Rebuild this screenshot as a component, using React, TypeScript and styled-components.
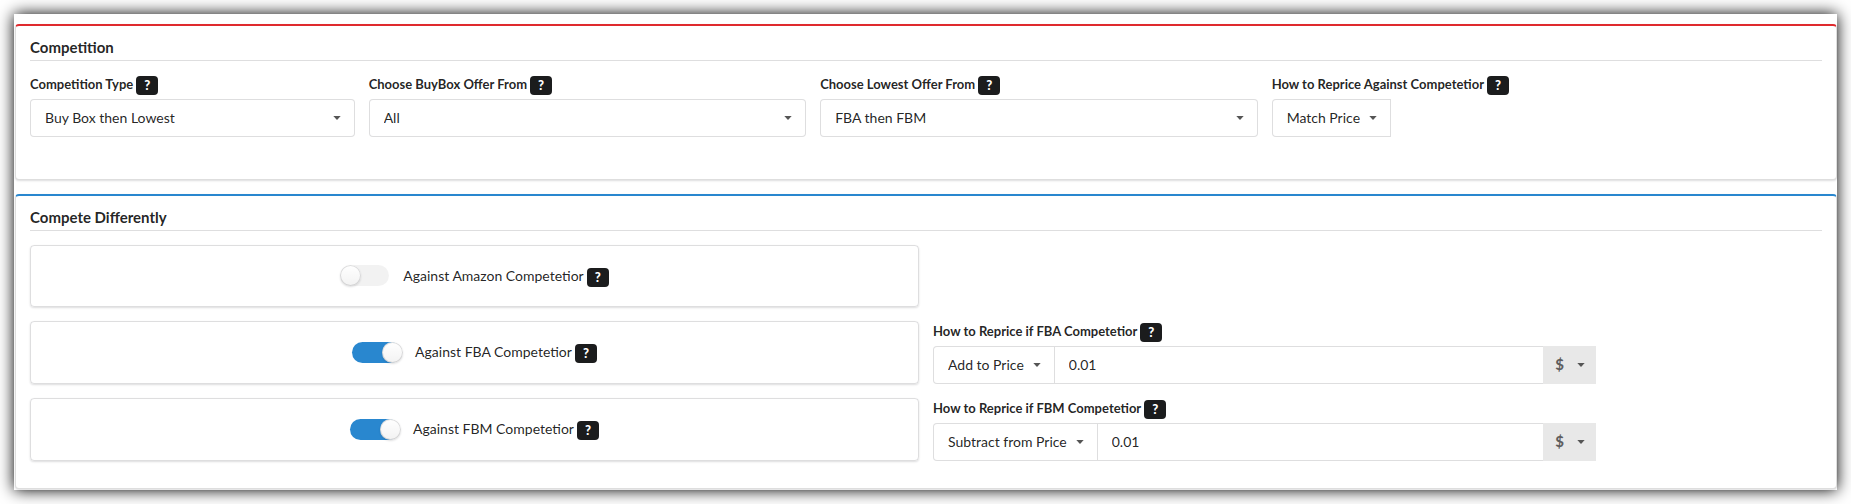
import React, { useId, useState } from "react";
import styled, { createGlobalStyle } from "styled-components";

const ink = "rgba(0, 0, 0, 0.87)";
const line = "rgba(34, 36, 38, 0.15)";
const red = "#df2a2e";
const blue = "#2987cf";

const GlobalStyle = createGlobalStyle`
  *, *::before, *::after { box-sizing: border-box; }
  body {
    margin: 0;
    background: #fff;
    color: ${ink};
    font: 14px/18px Lato, "Liberation Sans", sans-serif;
  }
  button, input, select { font: inherit; color: inherit; }
`;

const Page = styled.main`
  display: flex;
  flex-direction: column;
  gap: 14px;
  margin: 14px;
  padding: 10px 0 1px 1px;
  background: #fff;
  box-shadow: 0 0 15px #000;
`;

const Panel = styled.section<{ $accent: string; $bottom: number }>`
  padding: 14px 14px ${(p) => p.$bottom}px;
  border: 1px solid ${line};
  border-top: 2px solid ${(p) => p.$accent};
  border-radius: 4px;
  background: #fff;
  box-shadow: 0 1px 2px 0 ${line};
`;

const PanelTitle = styled.h2`
  margin: 0 0 14px;
  padding-bottom: 6px;
  border-bottom: 1px solid ${line};
  font-size: 15px;
  line-height: 14px;
  font-weight: 700;
`;

const Grid = styled.div`
  display: grid;
  grid-template-columns: repeat(16, minmax(0, 1fr));
  gap: 14px;
`;

const Field = styled.div<{ $span: number }>`
  grid-column: span ${(p) => p.$span};
`;

const AmountCell = styled(Field)`
  padding-top: 1px;
`;

const LabelRow = styled.div`
  display: flex;
  align-items: flex-end;
  gap: 3px;
  height: 20px;
  margin-bottom: 4px;
`;

const FieldLabel = styled.label`
  align-self: flex-start;
  font-size: 13px;
  font-weight: 700;
  white-space: nowrap;
`;

const HelpBadge = styled.button`
  flex: none;
  width: 22px;
  height: 19px;
  padding: 0;
  border: 0;
  border-radius: 4px;
  background: #1b1c1d;
  color: #fff;
  font-size: 13px;
  line-height: 19px;
  font-weight: 900;
`;

const SelectBox = styled.div<{ $fill?: boolean }>`
  position: relative;
  display: inline-flex;
  flex: none;
  width: ${(p) => (p.$fill ? "100%" : "auto")};
`;

const Select = styled.select<{ $fill?: boolean }>`
  appearance: none;
  field-sizing: ${(p) => (p.$fill ? "fixed" : "content")};
  width: ${(p) => (p.$fill ? "100%" : "auto")};
  height: 38px;
  padding: 0 30px 0 14px;
  border: 1px solid ${line};
  border-radius: ${(p) => (p.$fill ? "4px" : "4px 0 0 4px")};
  background: #fff;
`;

const UnitSelect = styled.select`
  appearance: none;
  width: 53px;
  height: 38px;
  padding: 0 0 2px 12px;
  border: 0;
  border-radius: 0;
  background: #e8e8e8;
  color: rgba(0, 0, 0, 0.6);
  font-size: 15px;
  font-weight: 900;
`;

const Caret = styled.svg<{ $right: number }>`
  position: absolute;
  right: ${(p) => p.$right}px;
  top: 17px;
  width: 8px;
  height: 4px;
  fill: #555;
  pointer-events: none;
`;

const InputGroup = styled.div`
  display: flex;
`;

const AmountInput = styled.input`
  flex: 1;
  min-width: 0;
  height: 38px;
  padding: 0 14px 2px;
  border: solid ${line};
  border-width: 1px 0;
  border-radius: 0;
  outline: 0;
`;

const ToggleCard = styled.div`
  grid-column: 1 / span 8;
  display: flex;
  justify-content: center;
  align-items: center;
  gap: 3px;
  min-height: 62px;
  padding-bottom: 1px;
  border: 1px solid ${line};
  border-radius: 4px;
  box-shadow: 0 1px 2px 0 ${line};

  ${HelpBadge} { margin-top: 3px; }
`;

const ToggleLabel = styled.label`
  display: flex;
  align-items: center;
  gap: 14px;
`;

const Switch = styled.input`
  appearance: none;
  display: flex;
  width: 49px;
  height: 21px;
  margin: 0;
  border-radius: 11px;
  background: rgba(0, 0, 0, 0.05);

  &::before {
    content: "";
    flex: none;
    width: 21px;
    height: 21px;
    border-radius: 50%;
    background: #fff linear-gradient(transparent, rgba(0, 0, 0, 0.05));
    box-shadow: 0 1px 2px 0 ${line}, 0 0 0 1px ${line} inset;
  }

  &:checked { background: ${blue}; }
  &:checked::before { margin-left: 30px; }
`;

function Arrow({ right = 14 }: { right?: number }) {
  return (
    <Caret $right={right} viewBox="0 0 8 4" aria-hidden="true">
      <path d="M0.3 0h7.4L4 4z" />
    </Caret>
  );
}

function Help() {
  return <HelpBadge type="button">?</HelpBadge>;
}

type Choice = { label: string; options: string[] };

function SelectField({ label, options, span, fill }: Choice & { span: number; fill?: boolean }) {
  const id = useId();
  return (
    <Field $span={span}>
      <LabelRow>
        <FieldLabel htmlFor={id}>{label}</FieldLabel>
        <Help />
      </LabelRow>
      <SelectBox $fill={fill}>
        <Select id={id} $fill={fill}>
          {options.map((o) => <option key={o}>{o}</option>)}
        </Select>
        <Arrow />
      </SelectBox>
    </Field>
  );
}

function AmountField({ label, options }: Choice) {
  const id = useId();
  const [amount, setAmount] = useState("0.01");
  return (
    <AmountCell $span={6}>
      <LabelRow>
        <FieldLabel htmlFor={id}>{label}</FieldLabel>
        <Help />
      </LabelRow>
      <InputGroup>
        <SelectBox>
          <Select aria-label="Adjustment">
            {options.map((o) => <option key={o}>{o}</option>)}
          </Select>
          <Arrow />
        </SelectBox>
        <AmountInput id={id} value={amount} onChange={(e) => setAmount(e.target.value)} />
        <SelectBox>
          <UnitSelect aria-label="Unit">
            <option>$</option>
            <option>%</option>
          </UnitSelect>
          <Arrow right={11} />
        </SelectBox>
      </InputGroup>
    </AmountCell>
  );
}

function ToggleRow({ label, on }: { label: string; on?: boolean }) {
  return (
    <ToggleCard>
      <ToggleLabel>
        <Switch type="checkbox" role="switch" defaultChecked={on} />
        {label}
      </ToggleLabel>
      <Help />
    </ToggleCard>
  );
}

export default function App() {
  return (
    <>
      <GlobalStyle />
      <Page>
        <Panel $accent={red} $bottom={42}>
          <PanelTitle>Competition</PanelTitle>
          <Grid>
            <SelectField span={3} fill label="Competition Type" options={["Buy Box then Lowest", "Lowest"]} />
            <SelectField span={4} fill label="Choose BuyBox Offer From" options={["All", "FBA", "FBM"]} />
            <SelectField span={4} fill label="Choose Lowest Offer From" options={["FBA then FBM", "All"]} />
            <SelectField
              span={5}
              label="How to Reprice Against Competetior"
              options={["Match Price", "Add to Price", "Subtract from Price"]}
            />
          </Grid>
        </Panel>
        <Panel $accent={blue} $bottom={27}>
          <PanelTitle>Compete Differently</PanelTitle>
          <Grid>
            <ToggleRow label="Against Amazon Competetior" />
            <ToggleRow label="Against FBA Competetior" on />
            <AmountField
              label="How to Reprice if FBA Competetior"
              options={["Add to Price", "Match Price", "Subtract from Price"]}
            />
            <ToggleRow label="Against FBM Competetior" on />
            <AmountField
              label="How to Reprice if FBM Competetior"
              options={["Subtract from Price", "Add to Price", "Match Price"]}
            />
          </Grid>
        </Panel>
      </Page>
    </>
  );
}
